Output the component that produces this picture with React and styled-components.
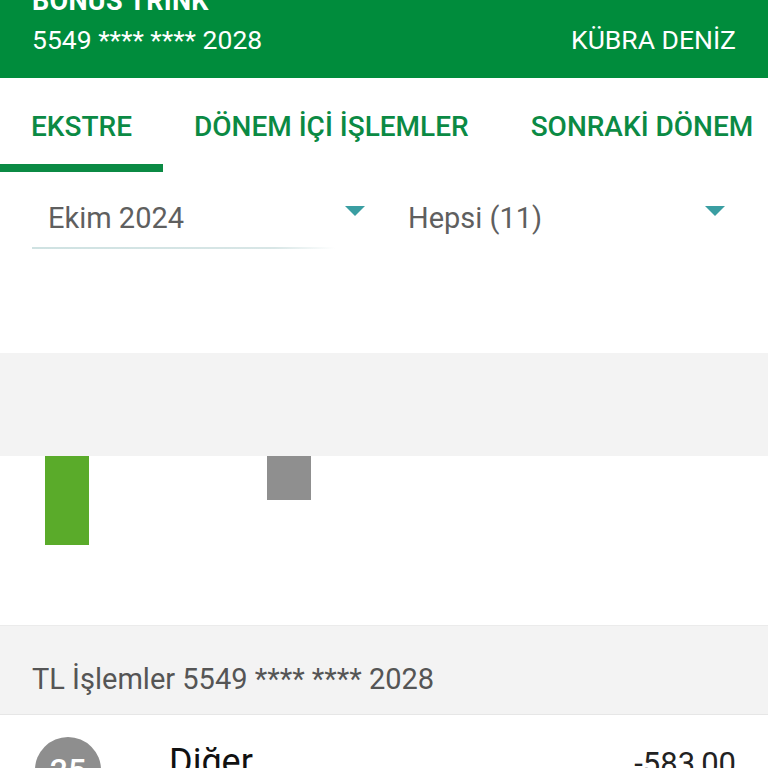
import styled, { createGlobalStyle } from "styled-components";

const Global = createGlobalStyle`
  html, body {
    margin: 0;
    padding: 0;
    background: #ffffff;
  }
  body {
    font-family: Roboto, "Noto Sans", "DejaVu Sans", sans-serif;
    width: 768px;
    height: 768px;
    overflow: hidden;
  }
  * {
    box-sizing: border-box;
  }
`;

const Page = styled.div`
  width: 768px;
  height: 768px;
  overflow: hidden;
  display: flex;
  flex-direction: column;
`;

const CardHeader = styled.header`
  height: 78px;
  flex-shrink: 0;
  background: #008c3c;
  color: #ffffff;
  padding: 0 32px 23px;
  display: flex;
  flex-direction: column;
  justify-content: flex-end;
  gap: 9px;
  overflow: hidden;
`;

const CardTitle = styled.h1`
  margin: 0;
  font-size: 27px;
  line-height: 30px;
  font-weight: 700;
  letter-spacing: 0.3px;
`;

const CardRow = styled.div`
  display: flex;
  justify-content: space-between;
  align-items: center;
  font-size: 26.5px;
  line-height: 30px;
  font-weight: 400;
`;

const Tabs = styled.nav`
  height: 94px;
  flex-shrink: 0;
  display: flex;
  overflow: hidden;
  white-space: nowrap;
`;

const Tab = styled.div`
  position: relative;
  flex-shrink: 0;
  padding: 0 31px;
  display: flex;
  align-items: center;
  padding-top: 2px;
  font-size: 28px;
  font-weight: 500;
  color: #0b8a44;

  &::after {
    content: "";
    position: absolute;
    left: 0;
    right: 0;
    bottom: 0;
    height: 8px;
    background: ${(p) => (p.$active ? "#0b8a44" : "transparent")};
  }
`;

const Filters = styled.div`
  display: flex;
  gap: 8px;
  padding: 0 24px 0 32px;
  height: 80px;
  flex-shrink: 0;
`;

const Select = styled.div`
  flex: 1;
  display: flex;
  align-items: center;
  justify-content: space-between;
  padding: 12px 19px 0 16px;
  font-size: 29px;
  color: #5f5f5f;
  position: relative;

  &::after {
    content: "";
    position: absolute;
    left: 0;
    right: 49px;
    bottom: 3px;
    height: 2px;
    background: ${(p) =>
      p.$underline
        ? "linear-gradient(90deg, #cfe2e2 0%, #d8e6e6 80%, rgba(216,230,230,0) 100%)"
        : "transparent"};
  }
`;

const Caret = styled.span`
  width: 0;
  height: 0;
  border-left: 10px solid transparent;
  border-right: 10px solid transparent;
  border-top: 10px solid #3a9ea2;
  margin-bottom: 14px;
`;

const Spacer = styled.div`
  height: ${(p) => p.$h}px;
  flex-shrink: 0;
  background: ${(p) => p.$bg || "#ffffff"};
`;

const Chart = styled.div`
  height: 170px;
  flex-shrink: 0;
  display: flex;
  align-items: flex-start;
  gap: 178px;
  padding-left: 45px;
  border-bottom: 1px solid #ebebeb;
`;

const Bar = styled.div`
  width: 44px;
  background: ${(p) => p.$color};
`;

const SectionHead = styled.div`
  height: 89px;
  flex-shrink: 0;
  background: #f3f3f3;
  border-bottom: 1px solid #e6e6e6;
  display: flex;
  align-items: center;
  padding: 18px 32px 0;
  font-size: 29px;
  color: #555555;
`;

const TxRow = styled.div`
  display: flex;
  align-items: flex-start;
  padding: 22px 32px 0 35px;
`;

const DayBadge = styled.div`
  width: 66px;
  height: 66px;
  border-radius: 50%;
  background: #8e8e8e;
  color: #ffffff;
  font-size: 32px;
  font-weight: 500;
  display: flex;
  align-items: center;
  justify-content: center;
  flex-shrink: 0;
`;

const TxName = styled.div`
  flex: 1;
  margin-left: 68px;
  margin-top: 4px;
  font-size: 36px;
  color: #111111;
`;

const TxAmount = styled.div`
  margin-top: 8px;
  font-size: 31px;
  color: #222222;
`;

export default function App() {
  const bars = [
    { h: 89, color: "#5aab2a" },
    { h: 44, color: "#8f8f8f" },
  ];

  return (
    <Page>
      <Global />
      <CardHeader>
        <CardTitle>BONUS TRINK</CardTitle>
        <CardRow>
          <span>5549 **** **** 2028</span>
          <span>KÜBRA DENİZ</span>
        </CardRow>
      </CardHeader>

      <Tabs>
        <Tab $active>EKSTRE</Tab>
        <Tab>DÖNEM İÇİ İŞLEMLER</Tab>
        <Tab>SONRAKİ DÖNEM</Tab>
      </Tabs>

      <Filters>
        <Select $underline>
          <span>Ekim 2024</span>
          <Caret />
        </Select>
        <Select>
          <span>Hepsi (11)</span>
          <Caret />
        </Select>
      </Filters>

      <Spacer $h={101} />
      <Spacer $h={103} $bg="#f3f3f3" />

      <Chart>
        {bars.map((b, i) => (
          <Bar key={i} $color={b.color} style={{ height: b.h }} />
        ))}
      </Chart>

      <SectionHead>TL İşlemler 5549 **** **** 2028</SectionHead>

      <TxRow>
        <DayBadge>25</DayBadge>
        <TxName>Diğer</TxName>
        <TxAmount>-583,00</TxAmount>
      </TxRow>
    </Page>
  );
}
